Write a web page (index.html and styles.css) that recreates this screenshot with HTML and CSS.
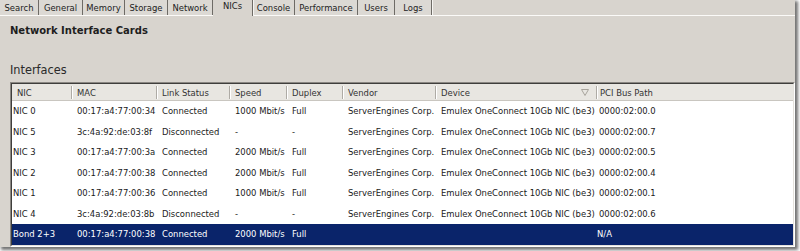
FILE: index.html
```html
<!DOCTYPE html>
<html>
<head>
<meta charset="utf-8">
<link rel="stylesheet" href="styles.css">
</head>
<body>
<div class="window">
  <div class="tabs">
    <div class="tab t1">Search</div>
    <div class="tab t2">General</div>
    <div class="tab t3">Memory</div>
    <div class="tab t4">Storage</div>
    <div class="tab t5">Network</div>
    <div class="tab t6 active">NICs</div>
    <div class="tab t7">Console</div>
    <div class="tab t8">Performance</div>
    <div class="tab t9">Users</div>
    <div class="tab t10">Logs</div>
    <div class="tab-fill"></div>
  </div>
  <div class="content">
    <div class="title">Network Interface Cards</div>
    <div class="section">Interfaces</div>
    <div class="list">
      <div class="list-inner">
        <div class="row head">
          <div class="hc">NIC</div>
          <div class="hc">MAC</div>
          <div class="hc">Link Status</div>
          <div class="hc">Speed</div>
          <div class="hc">Duplex</div>
          <div class="hc">Vendor</div>
          <div class="hc sorted">Device<svg class="sort" width="8" height="7" viewBox="0 0 8 7"><path d="M0.5 0.5 H7.5 L4 6.5 Z" fill="none" stroke="#a8a49c" stroke-width="1"/></svg></div>
          <div class="hc last">PCI Bus Path</div>
        </div>
        <div class="row">
          <div class="c first">NIC 0</div><div class="c">00:17:a4:77:00:34</div><div class="c">Connected</div><div class="c">1000 Mbit/s</div><div class="c">Full</div><div class="c">ServerEngines Corp.</div><div class="c">Emulex OneConnect 10Gb NIC (be3)</div><div class="c pci">0000:02:00.0</div>
        </div>
        <div class="row">
          <div class="c first">NIC 5</div><div class="c">3c:4a:92:de:03:8f</div><div class="c">Disconnected</div><div class="c">-</div><div class="c">-</div><div class="c">ServerEngines Corp.</div><div class="c">Emulex OneConnect 10Gb NIC (be3)</div><div class="c pci">0000:02:00.7</div>
        </div>
        <div class="row">
          <div class="c first">NIC 3</div><div class="c">00:17:a4:77:00:3a</div><div class="c">Connected</div><div class="c">2000 Mbit/s</div><div class="c">Full</div><div class="c">ServerEngines Corp.</div><div class="c">Emulex OneConnect 10Gb NIC (be3)</div><div class="c pci">0000:02:00.5</div>
        </div>
        <div class="row">
          <div class="c first">NIC 2</div><div class="c">00:17:a4:77:00:38</div><div class="c">Connected</div><div class="c">2000 Mbit/s</div><div class="c">Full</div><div class="c">ServerEngines Corp.</div><div class="c">Emulex OneConnect 10Gb NIC (be3)</div><div class="c pci">0000:02:00.4</div>
        </div>
        <div class="row">
          <div class="c first">NIC 1</div><div class="c">00:17:a4:77:00:36</div><div class="c">Connected</div><div class="c">1000 Mbit/s</div><div class="c">Full</div><div class="c">ServerEngines Corp.</div><div class="c">Emulex OneConnect 10Gb NIC (be3)</div><div class="c pci">0000:02:00.1</div>
        </div>
        <div class="row">
          <div class="c first">NIC 4</div><div class="c">3c:4a:92:de:03:8b</div><div class="c">Disconnected</div><div class="c">-</div><div class="c">-</div><div class="c">ServerEngines Corp.</div><div class="c">Emulex OneConnect 10Gb NIC (be3)</div><div class="c pci">0000:02:00.6</div>
        </div>
        <div class="row selected">
          <div class="c first">Bond 2+3</div><div class="c">00:17:a4:77:00:38</div><div class="c">Connected</div><div class="c">2000 Mbit/s</div><div class="c">Full</div><div class="c"></div><div class="c"></div><div class="c pci na">N/A</div>
        </div>
      </div>
    </div>
  </div>
</div>
</body>
</html>
```

FILE: styles.css
```css
html, body {
  margin: 0;
  padding: 0;
  background: #ffffff;
}

body {
  width: 800px;
  height: 251px;
  overflow: hidden;
  font-family: "DejaVu Sans Condensed", "DejaVu Sans", sans-serif;
  font-stretch: condensed;
  font-size: 9.4px;
  color: #1a1a1a;
}

.window {
  width: 795px;
  height: 247px;
  background: #d8d4ce;
  box-shadow: 2px 2px 3px 1px rgba(0, 0, 0, 0.55);
  display: flex;
  flex-direction: column;
}

/* ---------- tabs ---------- */
.tabs {
  display: flex;
  height: 15px;
  border-bottom: 1px solid #fbfaf8;
}

.tab {
  box-sizing: border-box;
  height: 15px;
  line-height: 15px;
  text-align: center;
  border-right: 1px solid #6e6b66;
  box-shadow: 1px 0 0 #f6f5f2;
  color: #222;
  background: #dcd9d4;
  white-space: nowrap;
}

.t1 { width: 39px; }
.t2 { width: 44px; }
.t3 { width: 42px; }
.t4 { width: 43px; }
.t5 { width: 45px; }
.t6 { width: 40px; }
.t7 { width: 42px; }
.t8 { width: 63px; }
.t9 { width: 37px; }
.t10 { width: 37px; }

.tab.active {
  height: 16px;
  line-height: 11px;
  background: #d8d4ce;
  margin-bottom: -1px;
  position: relative;
}

.tab-fill {
  flex: 1;
}

/* ---------- content ---------- */
.content {
  flex: 1;
  display: flex;
  flex-direction: column;
  padding-left: 10px;
}

.title {
  margin-top: 9px;
  font-family: "DejaVu Sans", sans-serif;
  font-stretch: normal;
  font-weight: bold;
  font-size: 10px;
  line-height: 12px;
  color: #1e1e1e;
}

.section {
  margin-top: 26px;
  font-size: 12.6px;
  line-height: 14px;
  color: #2a2a2a;
}

.list {
  margin-top: 5px;
  flex: 1;
  border: 1px solid;
  border-color: #8a8782 #ffffff #ffffff #8a8782;
  display: flex;
}

.list-inner {
  flex: 1;
  border: 1px solid;
  border-color: #3f3e3c #e4e1dc #e4e1dc #3f3e3c;
  background: #ffffff;
  overflow: hidden;
}

.row {
  display: grid;
  grid-template-columns: 60px 85px 73px 57px 56px 93px 161px 1fr;
  height: 20.57px;
  line-height: 20.57px;
  white-space: nowrap;
}

.row.head {
  height: 16px;
  line-height: 16px;
  background: #e8e6e1;
  border-bottom: 1px solid #c9c6c0;
  color: #333;
}

.hc {
  padding-left: 5px;
  position: relative;
  border-right: 1px solid #aeaba5;
  margin: 2px 0 1px;
  line-height: 13px;
  box-shadow: 1px 0 0 #ffffff;
}

.hc.last {
  border-right: none;
  box-shadow: none;
  padding-left: 3px;
}

.hc.sorted {
  display: flex;
  justify-content: space-between;
  align-items: center;
  padding-right: 7px;
}

.sort {
  display: block;
}

.c {
  padding-left: 5px;
  overflow: hidden;
}

.c.first {
  padding-left: 1px;
}

.c.pci {
  padding-left: 2px;
}

.c.na {
  padding-left: 0;
}

.row.selected {
  background: #0a246a;
  color: #ffffff;
}
```
